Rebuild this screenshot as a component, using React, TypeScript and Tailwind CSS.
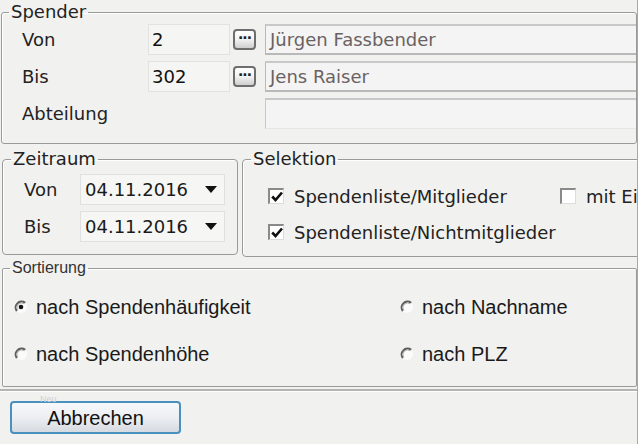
import type React from "react";

const Ellipsis = () => (
  <div className="w-[23px] h-[21px] rounded-[4px] border-2 border-[#6e6e6e] bg-linear-to-b from-[#ffffff] via-[#f2f2f2] to-[#cfcfcf] flex items-start justify-center pt-[2px]">
    <span className="text-[14px] leading-[10px] font-bold text-[#222] tracking-[-1px]">···</span>
  </div>
);

const Checkbox = ({ checked }: { checked: boolean }) => (
  <div className="w-[16px] h-[16px] shrink-0 border-t-2 border-l-2 border-[#8a8a8a] border-r border-b border-r-[#dcdcdc] border-b-[#dcdcdc] bg-white flex items-center justify-center">
    {checked && (
      <svg width="12" height="11" viewBox="0 0 12 11">
        <path d="M1.2 5.5 L4.5 9 L11 1.5" fill="none" stroke="#111" strokeWidth="2.6" />
      </svg>
    )}
  </div>
);

const Radio = ({ checked }: { checked: boolean }) => (
  <svg width="14" height="14" viewBox="0 0 14 14">
    <circle cx="7" cy="7" r="6" fill="#fbfbfb" />
    <path d="M11.2 2.8 A6 6 0 0 0 2.8 11.2" fill="none" stroke="#5e5e5e" strokeWidth="2" />
    <path d="M10.2 3.8 A4.6 4.6 0 0 0 3.8 10.2" fill="none" stroke="#b0b0b0" strokeWidth="1" />
    {checked && <circle cx="7" cy="7" r="2.3" fill="#111" />}
  </svg>
);

const DateBox = ({ value }: { value: string }) => (
  <div className="w-[145px] h-[31px] bg-[#f6f6f4] border border-[#e0e0de] flex items-center pl-[4px] pr-[7px]">
    <span className="flex-1 text-[18px] text-[#1a1a1a]">{value}</span>
    <svg width="12" height="7" viewBox="0 0 12 7">
      <path d="M0 0 H12 L6 7 Z" fill="#111" />
    </svg>
  </div>
);

const Legend = ({ children, className }: { children: React.ReactNode; className: string }) => (
  <legend className={`px-[2px] ${className}`}>{children}</legend>
);

export default function App() {
  return (
    <div className="w-[638px] h-[444px] overflow-hidden bg-[#f1f1ef] flex flex-col font-['DejaVu_Sans',sans-serif] text-[#222] border-r border-[#a8a8a8]">
      {/* Spender */}
      <fieldset className="mt-[1px] ml-[1px] w-[636px] min-w-0 border border-[#9a9a9a] rounded-[3px] shadow-[inset_1px_1px_0_#ffffff] pt-[1px] pb-[14px] flex flex-col gap-[6px]">
        <Legend className="ml-[7px] text-[18px] leading-[22px]">Spender</Legend>
        <div className="flex items-center h-[31px]">
          <div className="w-[146px] pl-[20px] text-[18px]">Von</div>
          <div className="w-[82px] h-[31px] bg-[#f5f5f3] border border-[#e2e2e0] flex items-center pl-[3px] text-[18px] text-[#111]">2</div>
          <div className="ml-[3px]"><Ellipsis /></div>
          <div className="ml-[9px] flex-1 h-[31px] bg-[#f4f4f4] border-y-2 border-l border-[#b9b9b9] border-t-[#c8c8c8] flex items-center pl-[4px] text-[18px] text-[#6a6262]">
            Jürgen Fassbender
          </div>
        </div>
        <div className="flex items-center h-[31px]">
          <div className="w-[146px] pl-[20px] text-[18px]">Bis</div>
          <div className="w-[82px] h-[31px] bg-[#f5f5f3] border border-[#e2e2e0] flex items-center pl-[3px] text-[18px] text-[#111]">302</div>
          <div className="ml-[3px]"><Ellipsis /></div>
          <div className="ml-[9px] flex-1 h-[31px] bg-[#f4f4f4] border-y-2 border-l border-[#b9b9b9] border-t-[#c8c8c8] flex items-center pl-[4px] text-[18px] text-[#6a6262]">
            Jens Raiser
          </div>
        </div>
        <div className="flex items-center h-[31px]">
          <div className="w-[263px] pl-[20px] text-[18px]">Abteilung</div>
          <div className="flex-1 h-[31px] bg-[#f4f4f4] border-t-2 border-l border-[#c8c8c8] border-b border-b-[#e6e6e6]" />
        </div>
      </fieldset>

      {/* Zeitraum + Selektion */}
      <div className="mt-[4px] flex gap-[4px] pl-[2px]">
        <fieldset className="w-[236px] shrink-0 min-w-0 h-[107px] border border-[#9a9a9a] rounded-[4px] shadow-[inset_1px_1px_0_#ffffff] pt-[4px] flex flex-col gap-[6px]">
          <Legend className="ml-[8px] text-[18px] leading-[22px]">Zeitraum</Legend>
          <div className="flex items-center">
            <div className="w-[77px] pl-[21px] text-[18px]">Von</div>
            <DateBox value="04.11.2016" />
          </div>
          <div className="flex items-center">
            <div className="w-[77px] pl-[21px] text-[18px]">Bis</div>
            <DateBox value="04.11.2016" />
          </div>
        </fieldset>
        <fieldset className="flex-1 min-w-0 overflow-hidden h-[109px] -mr-[4px] border border-[#9a9a9a] rounded-[4px] shadow-[inset_1px_1px_0_#ffffff] pt-[12px] flex flex-col gap-[8px]">
          <Legend className="ml-[8px] text-[18px] leading-[22px]">Selektion</Legend>
          <div className="flex items-center h-[28px] pl-[25px]">
            <div className="w-[292px] shrink-0 flex items-center gap-[10px]">
              <Checkbox checked />
              <span className="text-[18px] whitespace-nowrap">Spendenliste/Mitglieder</span>
            </div>
            <div className="flex items-center gap-[10px] whitespace-nowrap">
              <Checkbox checked={false} />
              <span className="text-[18px]">mit Ei</span>
            </div>
          </div>
          <div className="flex items-center h-[28px] pl-[25px] gap-[10px]">
            <Checkbox checked />
            <span className="text-[18px] whitespace-nowrap">Spendenliste/Nichtmitglieder</span>
          </div>
        </fieldset>
      </div>

      {/* Sortierung */}
      <fieldset className="mt-[1px] ml-[2px] w-[635px] min-w-0 border border-[#9a9a9a] rounded-[2px] shadow-[inset_1px_1px_0_#ffffff] pt-[14px] pb-[17px] flex flex-col gap-[17px] font-['Liberation_Sans',Arial,sans-serif]">
        <Legend className="ml-[7px] text-[16px] leading-[20px] text-[#333]">Sortierung</Legend>
        <div className="flex items-center h-[30px] pl-[11px] text-[20px] text-[#1a1a1a]">
          <div className="w-[386px] flex items-center gap-[8px]">
            <Radio checked />
            <span>nach Spendenhäufigkeit</span>
          </div>
          <div className="flex items-center gap-[8px]">
            <Radio checked={false} />
            <span>nach Nachname</span>
          </div>
        </div>
        <div className="flex items-center h-[30px] pl-[11px] text-[20px] text-[#1a1a1a]">
          <div className="w-[386px] flex items-center gap-[8px]">
            <Radio checked={false} />
            <span>nach Spendenhöhe</span>
          </div>
          <div className="flex items-center gap-[8px]">
            <Radio checked={false} />
            <span>nach PLZ</span>
          </div>
        </div>
      </fieldset>

      {/* Footer */}
      <div className="mt-[2px] border-t-2 border-[#b4b4b4] shadow-[inset_0_1px_0_#ffffff] flex-1 pl-[10px] pt-[10px] relative font-['Liberation_Sans',Arial,sans-serif]">
        <span className="absolute left-[40px] top-[2px] text-[9px] text-[#cfcfd4]">Neu</span>
        <button className="w-[171px] h-[33px] rounded-[4px] border-2 border-[#4a90bf] bg-linear-to-b from-[#f7f8fa] via-[#eceef2] to-[#d6dbe1] text-[20px] text-[#111] flex items-center justify-center">
          Abbrechen
        </button>
      </div>
    </div>
  );
}
